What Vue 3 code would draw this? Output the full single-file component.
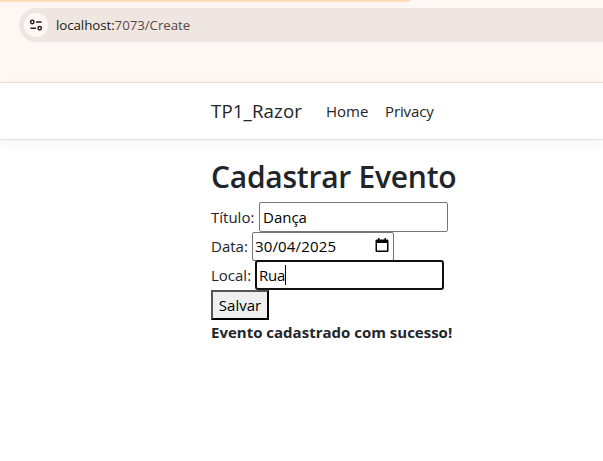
<script setup>
import { ref } from 'vue'

const title = ref('Dança')
const date = ref('30/04/2025')
const place = ref('Rua')
</script>

<template>
  <div class="window">
    <header class="chrome">
      <div class="tab-strip"></div>
      <div class="address">
        <span class="site-info">
          <svg width="14" height="14" viewBox="0 0 14 14" fill="none" stroke="#29211e" stroke-width="1.5">
            <circle cx="3.3" cy="4" r="1.7" />
            <path d="M7 4h5.6M1.4 10.2h5.6" />
            <circle cx="10.7" cy="10.2" r="1.7" />
          </svg>
        </span>
        <span class="url"><span class="host">localhost:</span>7073/Create</span>
      </div>
    </header>
    <nav class="navbar">
      <a class="brand">TP1_Razor</a>
      <a class="link home">Home</a>
      <a class="link privacy">Privacy</a>
    </nav>
    <main>
      <h1>Cadastrar Evento</h1>
      <div class="row title-row">
        <label class="l1">Título:</label>
        <input v-model="title" class="field text" type="text" />
      </div>
      <div class="row date-row">
        <label class="l2">Data:</label>
        <div class="field date">
          <span>{{ date }}</span>
          <svg width="14" height="15" viewBox="0 0 14 15">
            <path d="M3 0h1.5v1.5h5V0H11v1.5h1.2q1.3 0 1.3 1.3v9.9q0 1.3-1.3 1.3H1.8Q.5 14 .5 12.7V2.8q0-1.3 1.3-1.3H3zM2 5v7.5h10V5z" fill="#000" fill-rule="evenodd" />
          </svg>
        </div>
      </div>
      <div class="row place-row">
        <label class="l3">Local:</label>
        <div class="field focused"><span>{{ place }}</span><i class="caret"></i></div>
      </div>
      <button>Salvar</button>
      <p><strong>Evento cadastrado com sucesso!</strong></p>
    </main>
  </div>
</template>

<style>
body { margin: 0; background: #fff; overflow: hidden; }
</style>

<style scoped>
* { box-sizing: border-box; }
.window {
  height: 461px;
  overflow: hidden;
  background: #fff;
  color: #212529;
  font: 15px/24px "Open Sans", "Noto Sans", sans-serif;
  white-space: nowrap;
}
.chrome {
  height: 83px;
  background: #fff7f4;
  border-bottom: 1px solid #f3dfd0;
}
.tab-strip {
  width: 411px;
  height: 2px;
  background: #ffdcba;
  border-bottom-right-radius: 6px 2px;
}
.address {
  display: flex;
  align-items: center;
  height: 34px;
  margin: 6px 0 0 19px;
  padding-left: 5px;
  border-radius: 17px 0 0 17px;
  background: #efe6e1;
}
.site-info {
  display: flex;
  align-items: center;
  justify-content: center;
  width: 24px;
  height: 24px;
  border-radius: 50%;
  background: #fff7f4;
}
.url { margin-left: 8px; font-size: 13.3px; letter-spacing: -0.06px; color: #5a4a42; }
.host { color: #211a17; }
.navbar {
  display: flex;
  align-items: center;
  height: 57px;
  padding-left: 211px;
  border-bottom: 1px solid #dee2e6;
  box-shadow: 0 4px 12px rgba(0, 0, 0, 0.05);
}
.brand { width: 115px; font-size: 18.7px; letter-spacing: 0.12px; }
.link { width: 59px; }
.privacy { letter-spacing: -0.12px; }
main { padding: 18px 0 0 211px; }
h1 {
  height: 38px;
  margin: 0 0 6px;
  font-size: 30px;
  line-height: 38px;
  font-weight: 600;
  letter-spacing: -0.25px;
}
.row { display: flex; align-items: center; height: 29px; }
.title-row { height: 30px; }
label { flex: none; }
.l1 { width: 48px; }
.l2 { width: 41px; }
.l3 { width: 44px; }
.field {
  display: flex;
  align-items: center;
  height: 30px;
  padding: 0 3px;
  border: 1px solid #767676;
  border-radius: 2px;
  background: #fff;
  color: #000;
  font: inherit;
}
.text { width: 189px; }
.date {
  width: 142px;
  height: 29px;
  padding: 0 4px 2px 2px;
  justify-content: space-between;
  letter-spacing: 0.15px;
}
.date-row { height: 28px; align-items: flex-start; }
.date-row label { line-height: 29px; }
.place-row { height: 30px; }
.focused { width: 189px; padding: 0 2px; border: 2px solid #101010; border-radius: 3px; letter-spacing: -0.2px; }
.caret { width: 1px; height: 20px; background: #000; }
button {
  display: block;
  width: 58px;
  height: 30px;
  padding: 0;
  border: 2px outset #000;
  border-color: #555 #000 #000 #555;
  background: #efefef;
  color: #000;
  font: inherit;
}
p { margin: 0; }
strong { font-weight: 700; }
</style>
